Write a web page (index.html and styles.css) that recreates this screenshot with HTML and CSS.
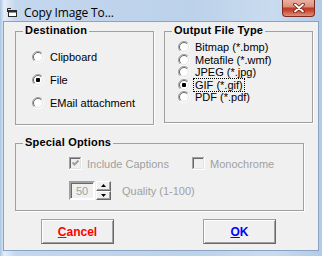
FILE: index.html
```html
<!DOCTYPE html>
<html>
<head>
<meta charset="utf-8">
<link rel="stylesheet" href="styles.css">
</head>
<body>
<div class="window">
  <div class="titlebar">
    <svg class="ticon" width="11" height="10" viewBox="0 0 11 10">
      <rect x="1.5" y="2.5" width="8" height="6" fill="#ffffff" stroke="#2b2b2b"/>
      <rect x="1.5" y="2.5" width="8" height="2" fill="#2b2b2b"/>
      <path d="M0.5 0.5 L4 0.5 M0.5 0.5 L0.5 4" stroke="#2b2b2b" fill="none"/>
    </svg>
    <span class="title">Copy Image To...</span>
    <div class="close">
      <svg width="12" height="10" viewBox="0 0 12 10">
        <path d="M2 1.5 L10 8.5 M10 1.5 L2 8.5" stroke="#6a2418" stroke-width="3.6" stroke-linecap="round"/>
        <path d="M2 1.5 L10 8.5 M10 1.5 L2 8.5" stroke="#ffffff" stroke-width="1.8" stroke-linecap="round"/>
      </svg>
    </div>
  </div>
  <div class="client">
    <div class="row-top">
      <fieldset class="group dest">
        <legend>Destination</legend>
        <div class="rows rows-dest">
          <label class="radio"><svg class="rb" width="12" height="12" viewBox="0 0 12 12"><circle cx="6" cy="6" r="4.5" fill="#fff"/><path d="M2.1 9.9 A5.5 5.5 0 0 1 9.9 2.1" fill="none" stroke="#a0a0a0"/><path d="M9.9 2.1 A5.5 5.5 0 0 1 2.1 9.9" fill="none" stroke="#ffffff"/><path d="M2.8 9.2 A4.5 4.5 0 0 1 9.2 2.8" fill="none" stroke="#696969"/><path d="M9.2 2.8 A4.5 4.5 0 0 1 2.8 9.2" fill="none" stroke="#e3e3e3"/></svg><span>Clipboard</span></label>
          <label class="radio"><svg class="rb" width="12" height="12" viewBox="0 0 12 12"><circle cx="6" cy="6" r="4.5" fill="#fff"/><path d="M2.1 9.9 A5.5 5.5 0 0 1 9.9 2.1" fill="none" stroke="#a0a0a0"/><path d="M9.9 2.1 A5.5 5.5 0 0 1 2.1 9.9" fill="none" stroke="#ffffff"/><path d="M2.8 9.2 A4.5 4.5 0 0 1 9.2 2.8" fill="none" stroke="#696969"/><path d="M9.2 2.8 A4.5 4.5 0 0 1 2.8 9.2" fill="none" stroke="#e3e3e3"/><rect x="4" y="4" width="4" height="4" rx="1" fill="#000"/></svg><span>File</span></label>
          <label class="radio"><svg class="rb" width="12" height="12" viewBox="0 0 12 12"><circle cx="6" cy="6" r="4.5" fill="#fff"/><path d="M2.1 9.9 A5.5 5.5 0 0 1 9.9 2.1" fill="none" stroke="#a0a0a0"/><path d="M9.9 2.1 A5.5 5.5 0 0 1 2.1 9.9" fill="none" stroke="#ffffff"/><path d="M2.8 9.2 A4.5 4.5 0 0 1 9.2 2.8" fill="none" stroke="#696969"/><path d="M9.2 2.8 A4.5 4.5 0 0 1 2.8 9.2" fill="none" stroke="#e3e3e3"/></svg><span>EMail attachment</span></label>
        </div>
      </fieldset>
      <fieldset class="group out">
        <legend>Output File Type</legend>
        <div class="rows rows-out">
          <label class="radio"><svg class="rb" width="12" height="12" viewBox="0 0 12 12"><circle cx="6" cy="6" r="4.5" fill="#fff"/><path d="M2.1 9.9 A5.5 5.5 0 0 1 9.9 2.1" fill="none" stroke="#a0a0a0"/><path d="M9.9 2.1 A5.5 5.5 0 0 1 2.1 9.9" fill="none" stroke="#ffffff"/><path d="M2.8 9.2 A4.5 4.5 0 0 1 9.2 2.8" fill="none" stroke="#696969"/><path d="M9.2 2.8 A4.5 4.5 0 0 1 2.8 9.2" fill="none" stroke="#e3e3e3"/></svg><span>Bitmap (*.bmp)</span></label>
          <label class="radio"><svg class="rb" width="12" height="12" viewBox="0 0 12 12"><circle cx="6" cy="6" r="4.5" fill="#fff"/><path d="M2.1 9.9 A5.5 5.5 0 0 1 9.9 2.1" fill="none" stroke="#a0a0a0"/><path d="M9.9 2.1 A5.5 5.5 0 0 1 2.1 9.9" fill="none" stroke="#ffffff"/><path d="M2.8 9.2 A4.5 4.5 0 0 1 9.2 2.8" fill="none" stroke="#696969"/><path d="M9.2 2.8 A4.5 4.5 0 0 1 2.8 9.2" fill="none" stroke="#e3e3e3"/></svg><span>Metafile (*.wmf)</span></label>
          <label class="radio"><svg class="rb" width="12" height="12" viewBox="0 0 12 12"><circle cx="6" cy="6" r="4.5" fill="#fff"/><path d="M2.1 9.9 A5.5 5.5 0 0 1 9.9 2.1" fill="none" stroke="#a0a0a0"/><path d="M9.9 2.1 A5.5 5.5 0 0 1 2.1 9.9" fill="none" stroke="#ffffff"/><path d="M2.8 9.2 A4.5 4.5 0 0 1 9.2 2.8" fill="none" stroke="#696969"/><path d="M9.2 2.8 A4.5 4.5 0 0 1 2.8 9.2" fill="none" stroke="#e3e3e3"/></svg><span>JPEG (*.jpg)</span></label>
          <label class="radio"><svg class="rb" width="12" height="12" viewBox="0 0 12 12"><circle cx="6" cy="6" r="4.5" fill="#fff"/><path d="M2.1 9.9 A5.5 5.5 0 0 1 9.9 2.1" fill="none" stroke="#a0a0a0"/><path d="M9.9 2.1 A5.5 5.5 0 0 1 2.1 9.9" fill="none" stroke="#ffffff"/><path d="M2.8 9.2 A4.5 4.5 0 0 1 9.2 2.8" fill="none" stroke="#696969"/><path d="M9.2 2.8 A4.5 4.5 0 0 1 2.8 9.2" fill="none" stroke="#e3e3e3"/><rect x="4" y="4" width="4" height="4" rx="1" fill="#000"/></svg><span class="focus">GIF (*.gif)</span></label>
          <label class="radio"><svg class="rb" width="12" height="12" viewBox="0 0 12 12"><circle cx="6" cy="6" r="4.5" fill="#fff"/><path d="M2.1 9.9 A5.5 5.5 0 0 1 9.9 2.1" fill="none" stroke="#a0a0a0"/><path d="M9.9 2.1 A5.5 5.5 0 0 1 2.1 9.9" fill="none" stroke="#ffffff"/><path d="M2.8 9.2 A4.5 4.5 0 0 1 9.2 2.8" fill="none" stroke="#696969"/><path d="M9.2 2.8 A4.5 4.5 0 0 1 2.8 9.2" fill="none" stroke="#e3e3e3"/></svg><span>PDF (*.pdf)</span></label>
        </div>
      </fieldset>
    </div>
    <fieldset class="group special">
      <legend>Special Options</legend>
      <div class="opts">
        <label class="check"><svg width="13" height="13" viewBox="0 0 13 13"><rect x="0" y="0" width="13" height="13" fill="#ffffff"/><rect x="0" y="0" width="12" height="12" fill="#a0a0a0"/><rect x="1" y="1" width="11" height="11" fill="#e3e3e3"/><rect x="1" y="1" width="10" height="10" fill="#696969"/><rect x="2" y="2" width="9" height="9" fill="#f0f0f0"/><path d="M3.5 5.5 L5.5 7.5 L9.5 3.5" fill="none" stroke="#a0a0a0" stroke-width="2"/></svg><span class="dis">Include Captions</span></label>
        <label class="check"><svg width="13" height="13" viewBox="0 0 13 13"><rect x="0" y="0" width="13" height="13" fill="#ffffff"/><rect x="0" y="0" width="12" height="12" fill="#a0a0a0"/><rect x="1" y="1" width="11" height="11" fill="#e3e3e3"/><rect x="1" y="1" width="10" height="10" fill="#696969"/><rect x="2" y="2" width="9" height="9" fill="#f0f0f0"/></svg><span class="dis">Monochrome</span></label>
        <div class="spinrow">
          <div class="spinbox">50</div>
          <div class="spin">
            <div class="sbtn"><svg width="5" height="3" viewBox="0 0 5 3"><path d="M2.5 0 L5 3 L0 3 Z" fill="#000"/></svg></div>
            <div class="sbtn"><svg width="5" height="3" viewBox="0 0 5 3"><path d="M0 0 L5 0 L2.5 3 Z" fill="#000"/></svg></div>
          </div>
          <span class="dis quality">Quality (1-100)</span>
        </div>
      </div>
    </fieldset>
    <div class="buttons">
      <div class="btn cancel"><span class="u">C</span>ancel</div>
      <div class="btn ok"><span class="u">O</span>K</div>
    </div>
  </div>
</div>
</body>
</html>
```
FILE: styles.css
```css
* { box-sizing: border-box; }
html, body { margin: 0; padding: 0; }
body {
  width: 322px;
  height: 256px;
  overflow: hidden;
  font-family: "Liberation Sans", Arial, sans-serif;
  font-size: 11px;
  color: #000;
}
.window {
  width: 322px;
  height: 256px;
  display: flex;
  flex-direction: column;
  background: linear-gradient(to right, #a9c4e3 0, #e4eef8 4px, #c3d7ee 16px, #bcd2ea 60%, #c9dbef 85%, #b2cbe7 100%);
}
.titlebar {
  height: 21px;
  flex: none;
  display: flex;
  align-items: flex-start;
  padding-left: 7px;
}
.ticon { margin-top: 8px; flex: none; }
.title {
  margin-left: 6px;
  margin-top: 5px;
  font-family: "Open Sans", "Noto Sans", sans-serif;
  font-size: 12px;
  line-height: 15px;
  letter-spacing: -0.15px;
  color: #000;
}
.close {
  margin-left: auto;
  margin-right: 7px;
  width: 33px;
  height: 17px;
  border: 1px solid #7a2c20;
  border-top: none;
  border-radius: 0 0 4px 4px;
  background: linear-gradient(#eab0a2 0, #dc9380 40%, #c43b22 52%, #c9462e 65%, #e0917c 100%);
  display: flex;
  align-items: center;
  justify-content: center;
}
.client {
  flex: 1;
  margin: 0 3px 5px 3px;
  border: 1px solid #8aa3c3;
  background: #f0f0f0;
  padding: 2px 0 0 11px;
  display: flex;
  flex-direction: column;
}
.row-top {
  display: flex;
  gap: 10px;
  align-items: flex-start;
}
.group {
  margin: 0;
  padding: 0;
  min-width: 0;
  border: 1px solid #a0a0a0;
  box-shadow: 1px 1px 0 #ffffff;
}
.group legend {
  margin-left: 7px;
  padding: 0 2px 2px 2px;
  font-weight: bold;
  font-size: 11px;
  line-height: 12px;
  letter-spacing: 0.2px;
}
.dest { width: 139px; }
.out { width: 149px; }
.rows { display: flex; flex-direction: column; }
.rows-dest { padding: 7px 0 10px 16px; }
.rows-out { padding: 3px 0 18px 13px; }
.radio {
  display: flex;
  align-items: center;
  gap: 6px;
  white-space: nowrap;
}
.rows-dest .radio { height: 23px; }
.rows-out .radio { height: 12.5px; gap: 5px; }
.rb { flex: none; }
.focus { outline: 1px dotted #000; outline-offset: 0; padding: 0 1px; margin-left: -1px; line-height: 12px; }
.special {
  width: 289px;
  margin-top: 11px;
}
.opts {
  display: grid;
  grid-template-columns: 123px auto;
  row-gap: 11px;
  padding: 7px 0 10px 53px;
}
.check {
  display: flex;
  align-items: center;
  gap: 5px;
  height: 13px;
  white-space: nowrap;
}
.check svg { flex: none; }
.dis { color: #a0a0a0; }
.spinrow {
  grid-column: 1 / 3;
  display: flex;
  align-items: center;
  height: 19px;
}
.spinbox {
  width: 26px;
  height: 19px;
  border-style: solid;
  border-width: 2px;
  border-color: #a0a0a0 #ffffff #ffffff #a0a0a0;
  box-shadow: inset 1px 1px #696969;
  background: #f0f0f0;
  color: #a0a0a0;
  display: flex;
  align-items: center;
  justify-content: center;
  padding-top: 1px;
}
.spin {
  margin-left: 1px;
  width: 15px;
  height: 19px;
  display: flex;
  flex-direction: column;
}
.sbtn {
  flex: 1;
  background: #f0f0f0;
  border-style: solid;
  border-width: 1px;
  border-color: #ffffff #696969 #696969 #ffffff;
  box-shadow: inset -1px -1px #a0a0a0;
  display: flex;
  align-items: center;
  justify-content: center;
}
.sbtn svg { display: block; }
.quality { margin-left: 11px; }
.buttons {
  display: flex;
  gap: 89px;
  margin-top: 8px;
  padding-left: 26px;
}
.btn {
  width: 73px;
  height: 25px;
  border: 1px solid #696969;
  border-top-color: #a0a0a0;
  border-left-color: #a0a0a0;
  box-shadow: inset 1px 1px #ffffff, inset -1px -1px #a0a0a0;
  background: #f0f0f0;
  display: flex;
  align-items: center;
  justify-content: center;
  font-weight: bold;
  font-size: 12px;
}
.cancel { color: #ff0000; }
.ok { color: #0000ff; }
.u { text-decoration: underline; }
```
